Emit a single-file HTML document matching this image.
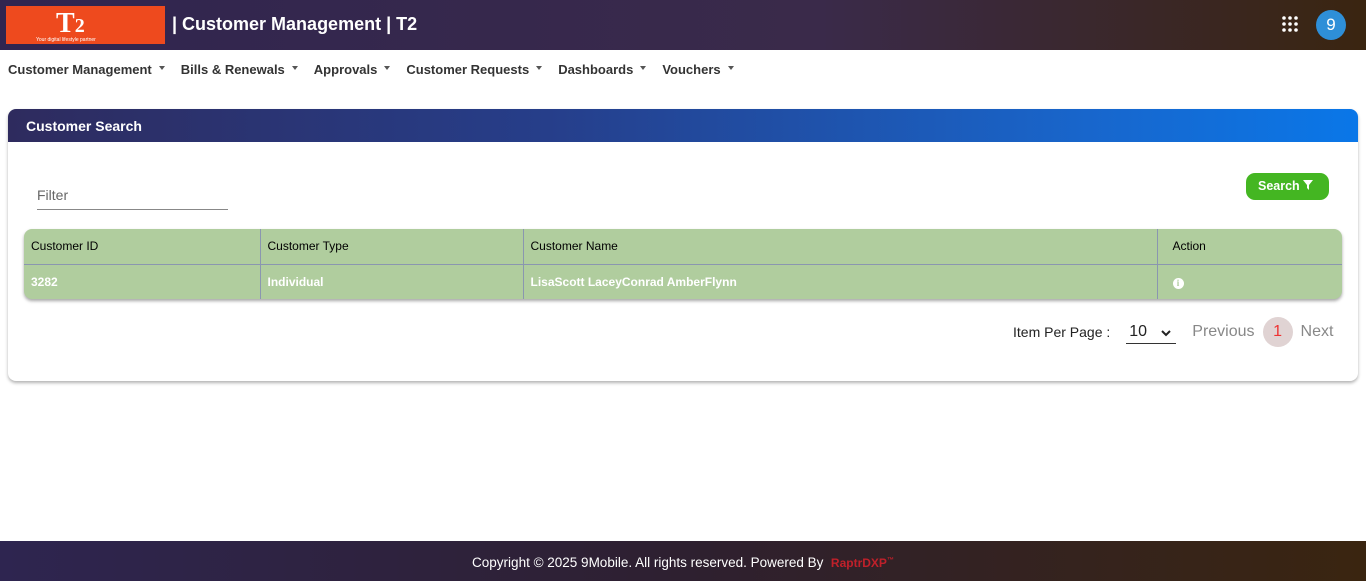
<!DOCTYPE html>
<html><head><meta charset="utf-8"><style>
*{box-sizing:border-box;margin:0;padding:0}
body{width:1366px;height:581px;position:relative;font-family:"Liberation Sans",Arial,sans-serif;background:#fff;overflow:hidden}
.top{position:absolute;left:0;top:0;width:1366px;height:50px;background:linear-gradient(90deg,#302550,#3a2a4a 60%,#3a2510)}
.logo{position:absolute;left:6px;top:6px;width:159px;height:38px;background:#ee4a1e;overflow:hidden}
.title{position:absolute;left:172px;top:14px;color:#fff;font-weight:bold;font-size:18px}
.av{position:absolute;left:1316px;top:10px;width:30px;height:30px;border-radius:50%;background:#2e8fd8;color:#fff;font-size:17px;text-align:center;line-height:30px}
.grid{position:absolute;left:1282px;top:16px}
.nav{position:absolute;top:62px;left:8px;font-size:13px;font-weight:bold;color:#333;display:flex}
.nav span{margin-right:16px}
.nav span:after{content:"";display:inline-block;margin-left:7px;border:3.5px solid transparent;border-top:4px solid #555;vertical-align:1px}
.card{position:absolute;left:8px;top:109px;width:1350px;height:272px;border-radius:8px;box-shadow:0 2px 3px rgba(0,0,0,.3);background:#fff}
.ch{height:33px;border-radius:8px 8px 0 0;background:linear-gradient(90deg,#2e2b5e,#263e8a 40%,#1866cc 80%,#0a77e8);color:#fff;font-weight:bold;font-size:14px;padding:9px 18px}
.filter{position:absolute;left:29px;top:78px;width:191px;height:23px;border-bottom:1px solid #888;color:#666;font-size:14px}
.btn{position:absolute;left:1238px;top:64px;width:83px;height:27px;border-radius:9px;background:#44b622;color:#fff;font-weight:bold;font-size:12.5px;padding:6px 12px}
table{position:absolute;left:16px;top:120px;width:1318px;border-collapse:collapse;background:#b0cd9e;font-size:12px;border-radius:8px;box-shadow:0 2px 3px rgba(0,0,0,.35)}
td{height:35px;padding:0 7px;border:1px solid #8a96b0;border-width:0 1px 1px 0}
tr:last-child td{border-bottom:0}
td:last-child{border-right:0;padding-left:15px}
.r td{color:#fff;font-weight:bold}
.pg{position:absolute;top:208px;left:1005px;font-size:14px;color:#222;display:flex;align-items:center}
</style></head><body>
<div class="top">
<div class="logo"><div style="position:absolute;left:50px;top:2px;color:#fff;font-size:28px;font-weight:bold;font-family:'Liberation Serif',serif">T<span style="font-size:20px">2</span></div><div style="position:absolute;left:30px;top:31px;color:#fff;font-size:5px">Your digital lifestyle partner</div></div>
<div class="title">| Customer Management | T2</div>
<svg class="grid" width="16" height="16" fill="#fff"><circle cx="2" cy="2" r="1.8"/><circle cx="8" cy="2" r="1.8"/><circle cx="14" cy="2" r="1.8"/><circle cx="2" cy="8" r="1.8"/><circle cx="8" cy="8" r="1.8"/><circle cx="14" cy="8" r="1.8"/><circle cx="2" cy="14" r="1.8"/><circle cx="8" cy="14" r="1.8"/><circle cx="14" cy="14" r="1.8"/></svg>
<div class="av">9</div>
</div>
<div class="nav"><span>Customer Management</span><span>Bills &amp; Renewals</span><span>Approvals</span><span>Customer Requests</span><span>Dashboards</span><span>Vouchers</span></div>
<div class="card">
<div class="ch">Customer Search</div>
<div class="filter">Filter</div>
<div class="btn">Search <svg width="10" height="10" viewBox="0 0 10 10"><path d="M0 0h10L6 5v5L4 8V5z" fill="#fff"/></svg></div>
<table>
<tr><td style="width:236px">Customer ID</td><td style="width:263px">Customer Type</td><td style="width:634px">Customer Name</td><td>Action</td></tr>
<tr class="r"><td>3282</td><td>Individual</td><td>LisaScott LaceyConrad AmberFlynn</td><td><span style="display:inline-block;width:11px;height:11px;border-radius:50%;background:#fff;color:#b0cd9e;font-size:9px;text-align:center;line-height:11px;font-family:'Liberation Serif'">i</span></td></tr>
</table>
<div class="pg"><span>Item Per Page :</span><span style="margin-left:16px;width:50px;border-bottom:1px solid #333;font-size:16px;padding:2px 3px;position:relative">10 <svg style="position:absolute;right:5px;top:9px" width="10" height="7" viewBox="0 0 10 7"><path d="M1 1l4 4 4-4" stroke="#222" stroke-width="2" fill="none"/></svg></span><span style="margin-left:16px;color:#888;font-size:16px">Previous</span><span style="margin-left:8px;width:30px;height:30px;border-radius:50%;background:#e0d3d3;color:#e33;text-align:center;line-height:30px;font-size:16px">1</span><span style="margin-left:8px;color:#888;font-size:16px">Next</span></div>
</div>
<div style="position:absolute;left:0;top:541px;width:1366px;height:40px;background:linear-gradient(90deg,#2e2550,#2e2030 50%,#3a2510);color:#fff;font-size:13.5px;text-align:center;line-height:40px">Copyright © 2025 9Mobile. All rights reserved. Powered By &nbsp;<b style="color:#c0202a;font-size:12px">RaptrDXP<sup style="font-size:7px">™</sup></b></div>
</body></html>
